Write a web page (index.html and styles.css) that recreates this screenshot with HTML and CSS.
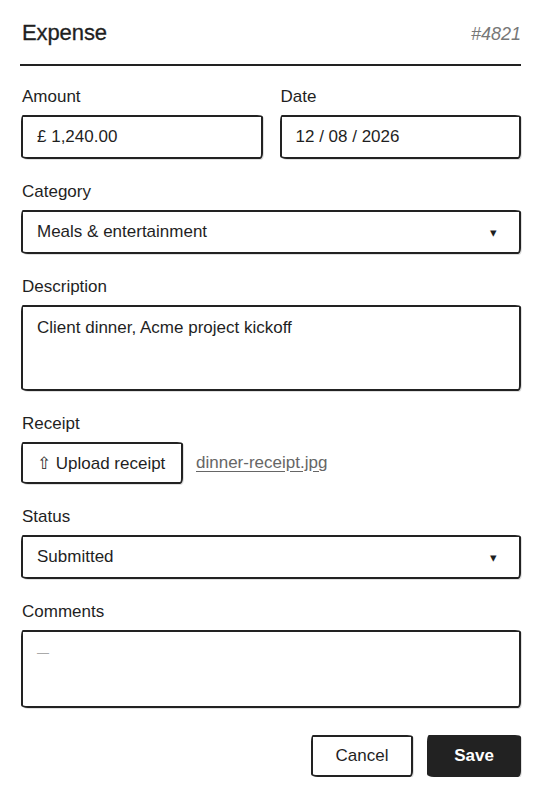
FILE: index.html
```html
<!DOCTYPE html>
<html lang="en">
<head>
<meta charset="utf-8">
<title>Expense</title>
<link rel="stylesheet" href="styles.css">
</head>
<body>
<div class="page">
  <header class="header">
    <h1 class="title">Expense</h1>
    <span class="ref">#4821</span>
  </header>
  <form class="form">
    <div class="row">
      <div class="field">
        <label class="label">Amount</label>
        <div class="box input">£ 1,240.00</div>
      </div>
      <div class="field">
        <label class="label">Date</label>
        <div class="box input">12 / 08 / 2026</div>
      </div>
    </div>
    <div class="field">
      <label class="label">Category</label>
      <div class="box input select"><span>Meals &amp; entertainment</span><span class="caret">▾</span></div>
    </div>
    <div class="field">
      <label class="label">Description</label>
      <div class="box area desc">Client dinner, Acme project kickoff</div>
    </div>
    <div class="field">
      <label class="label">Receipt</label>
      <div class="upload-row">
        <div class="box upload">⇧ Upload receipt</div>
        <span class="file">dinner-receipt.jpg</span>
      </div>
    </div>
    <div class="field">
      <label class="label">Status</label>
      <div class="box input select"><span>Submitted</span><span class="caret">▾</span></div>
    </div>
    <div class="field">
      <label class="label">Comments</label>
      <div class="box area comments"><span class="placeholder">—</span></div>
    </div>
    <div class="actions">
      <div class="box btn cancel">Cancel</div>
      <div class="box btn save">Save</div>
    </div>
  </form>
</div>
</body>
</html>
```
FILE: styles.css
```css
* { box-sizing: border-box; }
html, body { margin: 0; padding: 0; background: #fff; }
body {
  font-family: "Liberation Sans", Arial, sans-serif;
  color: #1f1f1f;
  font-size: 17px;
}
.page {
  width: 547px;
  padding: 18px 26px 0 20px;
}
.header {
  display: flex;
  justify-content: space-between;
  align-items: baseline;
  height: 48px;
  border-bottom: 2px solid #222;
  padding-left: 2px;
}
.title {
  margin: 0;
  font-size: 22px;
  font-weight: normal;
  line-height: 30px;
  letter-spacing: -0.1px;
  -webkit-text-stroke: 0.3px #1f1f1f;
}
.ref {
  font-style: italic;
  color: #777;
  font-size: 18px;
  line-height: 30px;
}
.form {
  display: flex;
  flex-direction: column;
  gap: 19px;
  padding-top: 17px;
}
.row {
  display: grid;
  grid-template-columns: 1fr 1fr;
  gap: 16px;
}
.field {
  display: flex;
  flex-direction: column;
}
.label {
  display: block;
  line-height: 22px;
  height: 25px;
  padding-top: 3px;
  margin-bottom: 7px;
  padding-left: 2px;
}
.box {
  border: 2px solid #222;
  border-radius: 2px 6px 3px 7px / 7px 2px 6px 3px;
  background: #fff;
  box-shadow: 1px 1px 0 rgba(0,0,0,0.12);
}
.input {
  height: 44px;
  padding: 0 14px;
  display: flex;
  align-items: center;
  margin-left: 1px;
}
.select {
  justify-content: space-between;
}
.caret {
  font-size: 13px;
  margin-right: 8px;
}
.area {
  padding: 10px 14px;
  line-height: 22px;
  margin-left: 1px;
}
.desc { height: 86px; }
.comments { height: 78px; }
.placeholder { color: #aaa; font-size: 12px; vertical-align: 2px; }
.upload-row {
  display: flex;
  align-items: center;
  gap: 13px;
  margin-left: 1px;
}
.upload {
  height: 42px;
  width: 162px;
  display: flex;
  align-items: center;
  padding: 0 14px;
}
.file {
  color: #666;
  text-decoration: underline;
  text-underline-offset: 3px;
}
.actions {
  display: flex;
  justify-content: flex-end;
  gap: 14px;
  margin-top: 8px;
}
.btn {
  height: 42px;
  display: flex;
  align-items: center;
  justify-content: center;
}
.cancel { width: 102px; }
.save {
  width: 94px;
  background: #222;
  color: #fff;
  font-weight: bold;
}
```
